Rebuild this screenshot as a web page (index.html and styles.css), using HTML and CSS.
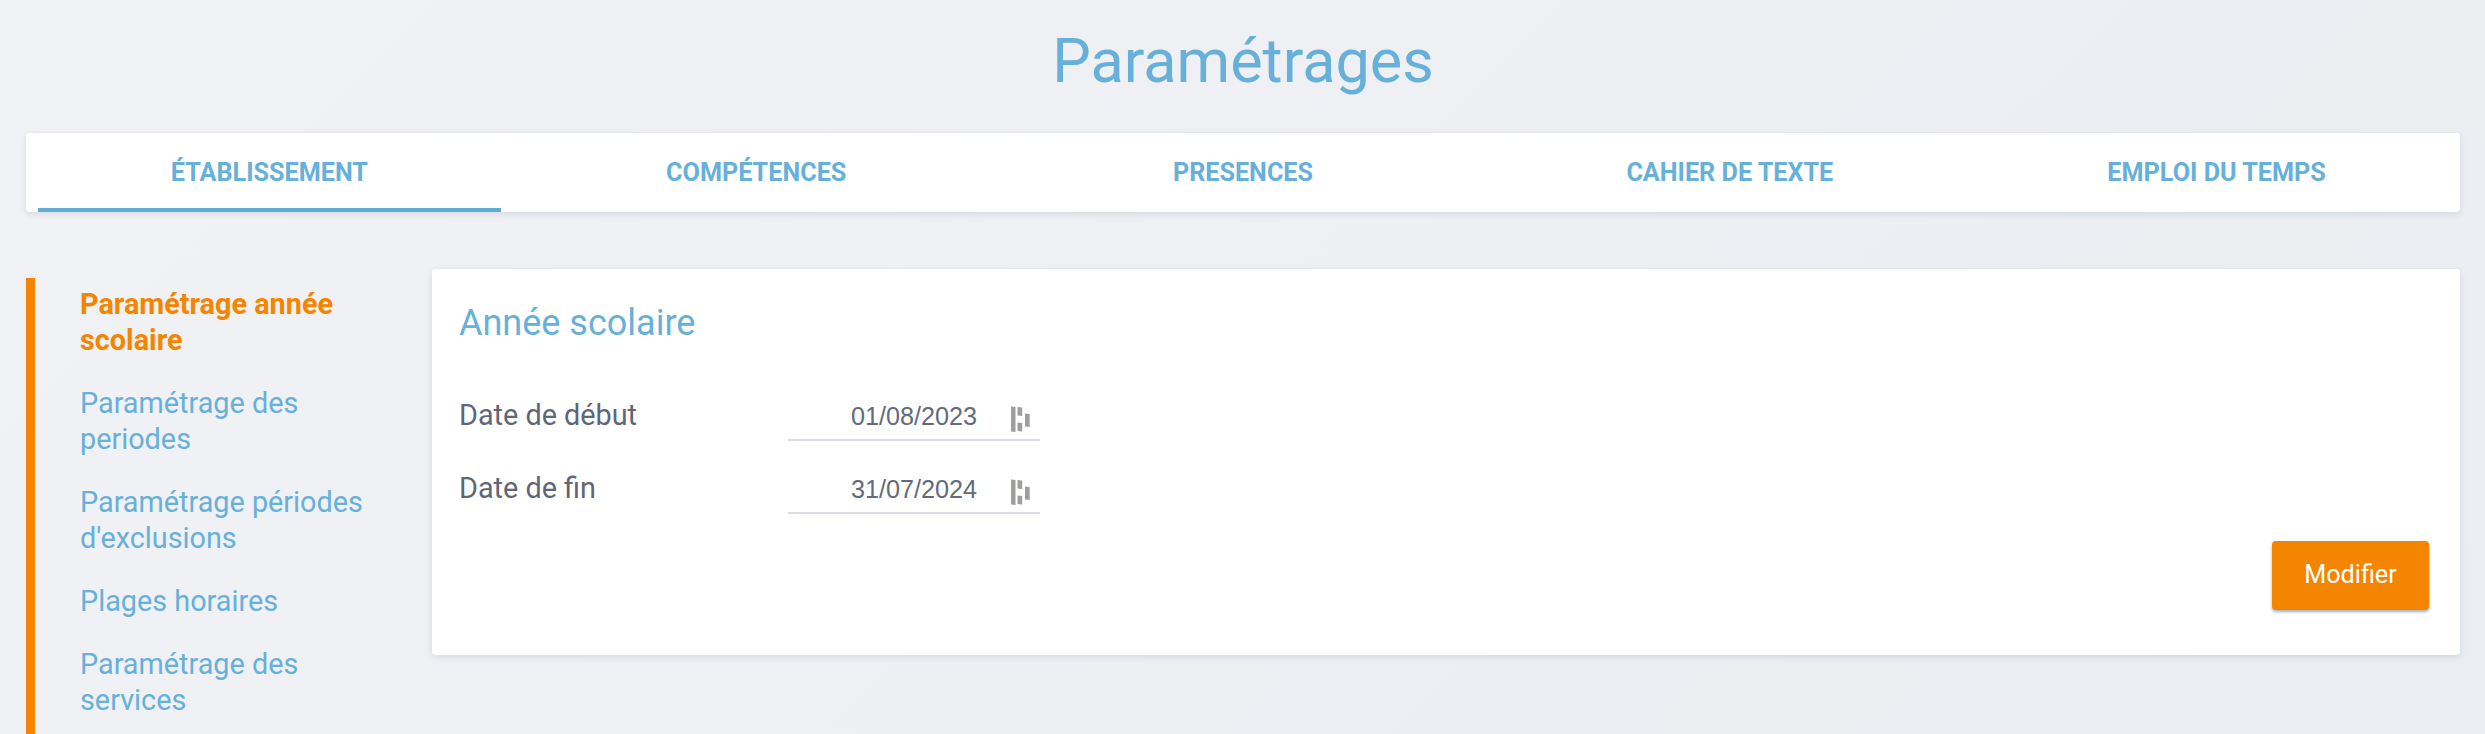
FILE: index.html
```html
<!DOCTYPE html>
<html lang="fr">
<head>
<meta charset="utf-8">
<title>Paramétrages</title>
<link rel="stylesheet" href="styles.css">
</head>
<body>
<h1 class="page-title">Paramétrages</h1>
<nav class="tabs">
  <a class="tab tab-active">ÉTABLISSEMENT</a>
  <a class="tab">COMPÉTENCES</a>
  <a class="tab">PRESENCES</a>
  <a class="tab">CAHIER DE TEXTE</a>
  <a class="tab">EMPLOI DU TEMPS</a>
</nav>
<div class="content">
  <ul class="side-menu">
    <li class="side-item side-item-active">Paramétrage année scolaire</li>
    <li class="side-item">Paramétrage des periodes</li>
    <li class="side-item">Paramétrage périodes d'exclusions</li>
    <li class="side-item">Plages horaires</li>
    <li class="side-item">Paramétrage des services</li>
  </ul>
  <section class="card">
    <h2 class="card-title">Année scolaire</h2>
    <div class="field">
      <span class="field-label">Date de début</span>
      <div class="field-input">
        <span class="field-value">01/08/2023</span>
        <svg class="field-icon" viewBox="0 0 19 26" aria-hidden="true"><path d="M0 0.5L4.5 1V26L0 25.5ZM6.5 1L11.2 1.5V10L6.5 9.5ZM6.5 16.5L11.2 17V25.5L6.5 25ZM14 7.5L18.7 8V21L14 20.5Z"/></svg>
      </div>
    </div>
    <div class="field">
      <span class="field-label">Date de fin</span>
      <div class="field-input">
        <span class="field-value">31/07/2024</span>
        <svg class="field-icon" viewBox="0 0 19 26" aria-hidden="true"><path d="M0 0.5L4.5 1V26L0 25.5ZM6.5 1L11.2 1.5V10L6.5 9.5ZM6.5 16.5L11.2 17V25.5L6.5 25ZM14 7.5L18.7 8V21L14 20.5Z"/></svg>
      </div>
    </div>
    <button class="btn-primary" type="button">Modifier</button>
  </section>
</div>
</body>
</html>
```
FILE: styles.css
```css
* { box-sizing: border-box; }
html, body { height: 100%; overflow: hidden; }
body {
  margin: 0;
  padding: 0 25px 0 26px;
  display: flex;
  flex-direction: column;
  font-family: Roboto, sans-serif;
  font-feature-settings: "liga", "dlig";
  text-rendering: optimizeLegibility;
  background: linear-gradient(135deg, #f1f2f5 0%, #ebedf2 100%);
}
.page-title {
  margin: 0;
  height: 133px;
  padding-top: 26px;
  text-align: center;
  font-size: 61.2px;
  font-weight: 400;
  line-height: 70px;
  color: #66b0d9;
  flex: none;
}
.tabs {
  display: flex;
  height: 79px;
  flex: none;
  background: #fff;
  border-radius: 4px;
  box-shadow: 0 2px 6px rgba(60, 70, 90, 0.14);
}
.tab {
  flex: 1;
  margin: 0 12px;
  display: flex;
  align-items: center;
  justify-content: center;
  font-size: 25.2px;
  font-weight: 700;
  color: #66b0d9;
}
.tab-active { box-shadow: inset 0 -4px 0 #61acd7; }
.content {
  flex: 1;
  display: flex;
  align-items: flex-start;
  margin-top: 57px;
  min-height: 0;
}
.side-menu {
  flex: 0 0 406px;
  align-self: stretch;
  margin: 9px 0 0;
  padding: 8px 40px 0 45px;
  list-style: none;
  border-left: 9px solid #f48500;
}
.side-item {
  margin-bottom: 27px;
  font-size: 28.8px;
  line-height: 36px;
  color: #66b0d9;
}
.side-item-active {
  font-weight: 700;
  color: #f48500;
}
.card {
  flex: 1;
  height: 386px;
  display: flex;
  flex-direction: column;
  padding: 32px 31px 45px 27px;
  background: #fff;
  border-radius: 4px;
  box-shadow: 0 2px 6px rgba(60, 70, 90, 0.14);
}
.card-title {
  margin: 0 0 23px;
  font-size: 36px;
  font-weight: 400;
  line-height: 44px;
  color: #66b0d9;
}
.field {
  display: flex;
  align-items: flex-end;
  height: 73px;
  flex: none;
}
.field-label {
  flex: 0 0 329px;
  align-self: flex-start;
  margin-top: 29px;
  font-size: 28.8px;
  line-height: 36px;
  color: #5f6678;
}
.field-input {
  width: 252px;
  height: 46px;
  display: flex;
  align-items: center;
  justify-content: flex-end;
  padding-right: 10px;
  border-bottom: 2px solid #dcdde4;
}
.field-value {
  margin-right: 34px;
  margin-bottom: 2px;
  font-family: "Liberation Sans", sans-serif;
  font-size: 25.2px;
  color: #626b7d;
}
.field-icon {
  width: 19px;
  height: 26px;
  margin-top: 4px;
  fill: #a09e9c;
}
.btn-primary {
  width: 157px;
  height: 69px;
  margin-top: auto;
  align-self: flex-end;
  padding: 0 0 2px;
  border: 0;
  border-radius: 4px;
  background: #f48500;
  color: #fff;
  font-family: Roboto, sans-serif;
  font-size: 25.2px;
  box-shadow: 0 2px 3px rgba(40, 50, 70, 0.4);
}
```
